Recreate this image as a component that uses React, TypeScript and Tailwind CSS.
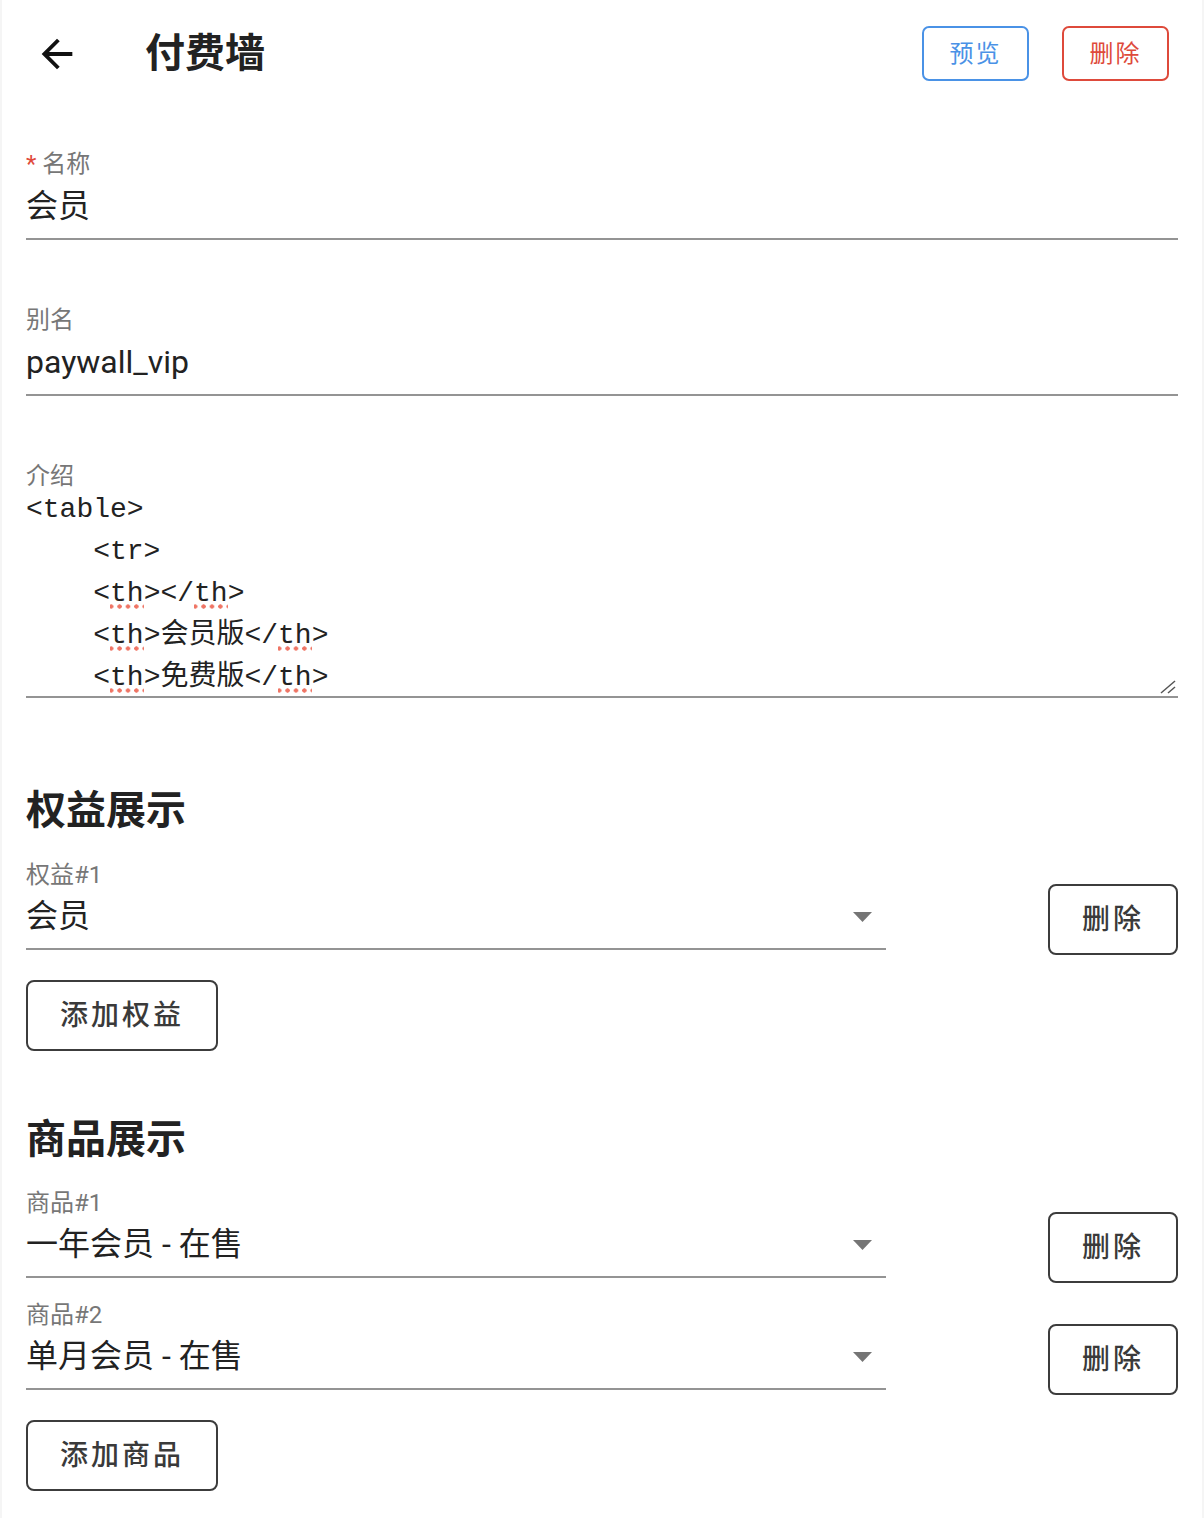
import React from 'react'
import { MdArrowBack } from 'react-icons/md'

// label + value + underline, like a material text field
const TextField = ({ label, value, required }: { label: string; value: string; required?: boolean }) => (
  <div className="border-b-2 border-[#949494] pb-[10px]">
    <div className="h-[28px] text-[24px] leading-[28px] text-[#777777]">
      {required && <span className="text-[#e04a3c]">* </span>}
      {label}
    </div>
    <div className="mt-[6px] h-[44px] text-[32px] leading-[44px] text-[#222222]">{value}</div>
  </div>
)

const OutlineButton = ({ children, className = '' }: { children: React.ReactNode; className?: string }) => (
  <button
    className={`flex items-center justify-center rounded-[8px] border-2 border-[#3c3c3c] bg-white text-[28px] font-medium tracking-[3px] text-[#3a3a3a] ${className}`}
  >
    {children}
  </button>
)

const SelectRow = ({ label, value, className = '' }: { label: string; value: string; className?: string }) => (
  <div className={`flex items-start justify-between ${className}`}>
    <div className="w-[860px] border-b-2 border-[#949494] pb-[10px]">
      <div className="h-[28px] text-[24px] leading-[28px] text-[#777777]">{label}</div>
      <div className="mt-[5px] flex h-[44px] items-center justify-between pr-[14px]">
        <span className="text-[32px] leading-[44px] text-[#222222]">{value}</span>
        <svg width="19" height="10" viewBox="0 0 19 10" className="mt-[2px]">
          <polygon points="0,0 19,0 9.5,10" fill="#757575" />
        </svg>
      </div>
    </div>
    <OutlineButton className="mt-[23px] h-[71px] w-[130px]">删除</OutlineButton>
  </div>
)

// red spellcheck dots under "th"
const Th = () => (
  <span className="relative inline-block">
    th
    <span className="absolute bottom-[6px] left-0 right-0 h-[5px] bg-[radial-gradient(circle,#ef7565_1.9px,transparent_2.4px)] bg-[length:8.4px_5px] bg-[position:-3px_0] bg-repeat-x" />
  </span>
)

const App = () => {
  return (
    <div className="min-h-screen bg-[#f5f5f5] px-[2px] font-['Roboto','Noto_Sans_CJK_SC',sans-serif]">
      <div className="min-h-screen bg-white px-6 pb-[27px] pt-[26px]">
        {/* header */}
        <div className="flex h-[55px] items-center">
          <MdArrowBack size={46} className="ml-[8px] text-[#111111]" />
          <h1 className="ml-[65px] text-[40px] font-bold leading-[48px] text-[#222222]">付费墙</h1>
          <div className="ml-auto mr-[9px] flex gap-[33px]">
            <button className="h-[55px] w-[107px] rounded-[7px] border-2 border-[#4a92e6] text-[24px] tracking-[2px] text-[#4a92e6]">
              预览
            </button>
            <button className="h-[55px] w-[107px] rounded-[7px] border-2 border-[#de4a3b] text-[24px] tracking-[2px] text-[#de4a3b]">
              删除
            </button>
          </div>
        </div>

        <div className="mt-[69px]">
          <TextField label="名称" value="会员" required />
        </div>
        <div className="mt-[66px]">
          <TextField label="别名" value="paywall_vip" />
        </div>

        {/* intro textarea */}
        <div className="mt-[66px] border-b-2 border-[#949494]">
          <div className="h-[28px] text-[24px] leading-[28px] text-[#777777]">介绍</div>
          <div className="relative -mt-[1px] h-[207px] overflow-hidden whitespace-pre font-['Liberation_Mono','Noto_Sans_CJK_SC',monospace] text-[28px] leading-[42px] text-[#222222]">
            <div>{'<table>'}</div>
            <div>{'    <tr>'}</div>
            <div>
              {'    <'}
              <Th />
              {'></'}
              <Th />
              {'>'}
            </div>
            <div>
              {'    <'}
              <Th />
              {'>会员版</'}
              <Th />
              {'>'}
            </div>
            <div>
              {'    <'}
              <Th />
              {'>免费版</'}
              <Th />
              {'>'}
            </div>
            <svg width="16" height="14" viewBox="0 0 16 14" className="absolute bottom-[2px] right-[2px]">
              <line x1="1" y1="13" x2="15" y2="1" stroke="#555555" strokeWidth="1.5" />
              <line x1="8" y1="13" x2="15" y2="7" stroke="#555555" strokeWidth="1.5" />
            </svg>
          </div>
        </div>

        {/* benefits */}
        <h2 className="mt-[89px] text-[40px] font-bold leading-[48px] text-[#222222]">权益展示</h2>
        <SelectRow label="权益#1" value="会员" className="mt-[26px]" />
        <OutlineButton className="mt-[25px] h-[71px] w-[192px]">添加权益</OutlineButton>

        {/* products */}
        <h2 className="mt-[65px] text-[40px] font-bold leading-[48px] text-[#222222]">商品展示</h2>
        <SelectRow label="商品#1" value="一年会员 - 在售" className="mt-[25px]" />
        <SelectRow label="商品#2" value="单月会员 - 在售" className="mt-[18px]" />
        <OutlineButton className="mt-[25px] h-[71px] w-[192px]">添加商品</OutlineButton>
      </div>
    </div>
  )
}

export default App
